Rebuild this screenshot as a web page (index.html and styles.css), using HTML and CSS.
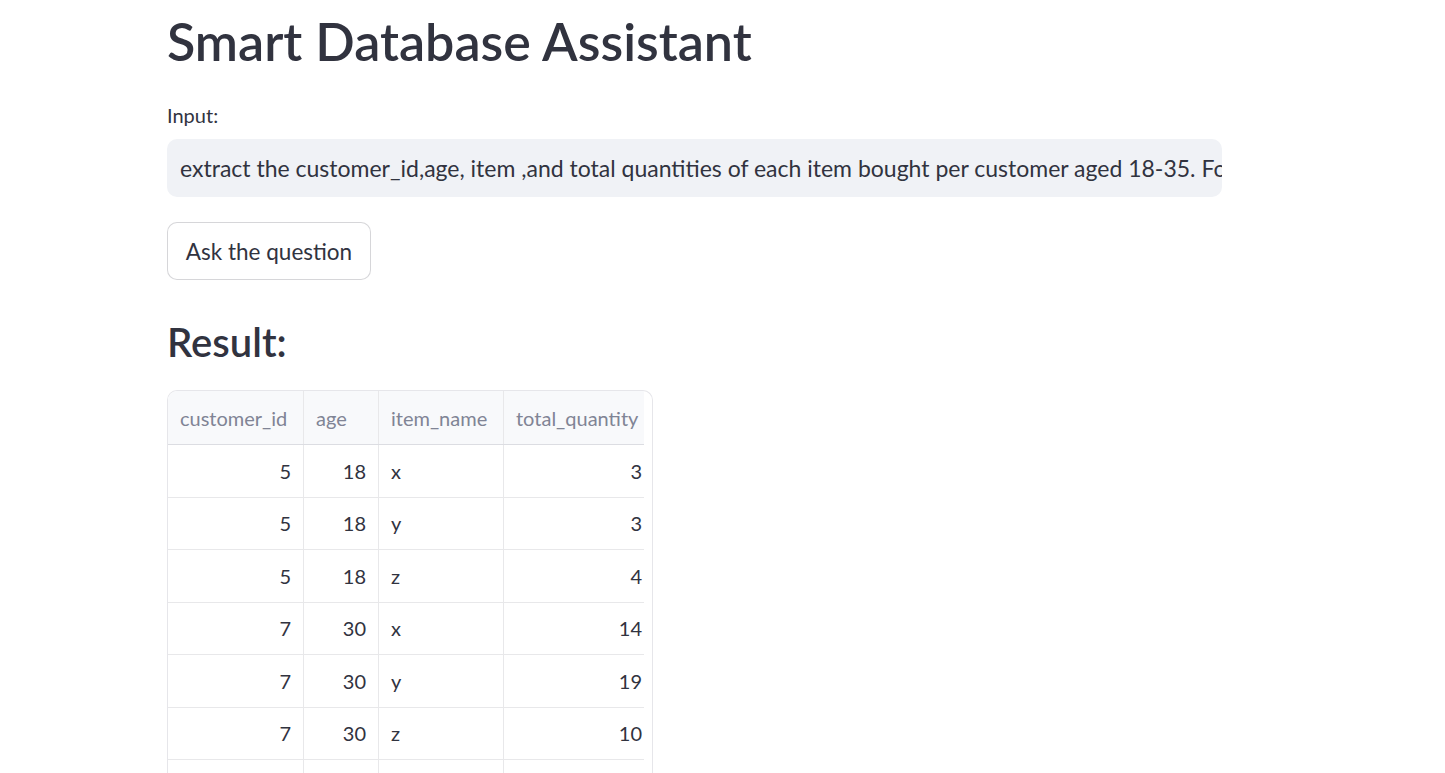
FILE: index.html
```html
<!DOCTYPE html>
<html>
<head>
<meta charset="utf-8">
<link rel="stylesheet" href="styles.css">
</head>
<body>
<main class="main">
  <h1 class="title">Smart Database Assistant</h1>
  <div class="field">
    <label class="label">Input:</label>
    <div class="input">extract the customer_id,age, item ,and total quantities of each item bought per customer aged 18-35. For each customer show the totals</div>
  </div>
  <div class="btn-row"><button class="btn">Ask the question</button></div>
  <h2 class="subtitle">Result:</h2>
  <div class="grid-wrap">
    <div class="grid">
      <div class="row head">
        <div class="cell c1">customer_id</div>
        <div class="cell c2">age</div>
        <div class="cell c3">item_name</div>
        <div class="cell c4">total_quantity</div>
      </div>
      <div class="row"><div class="cell c1 num">5</div><div class="cell c2 num">18</div><div class="cell c3">x</div><div class="cell c4 num">3</div></div>
      <div class="row"><div class="cell c1 num">5</div><div class="cell c2 num">18</div><div class="cell c3">y</div><div class="cell c4 num">3</div></div>
      <div class="row"><div class="cell c1 num">5</div><div class="cell c2 num">18</div><div class="cell c3">z</div><div class="cell c4 num">4</div></div>
      <div class="row"><div class="cell c1 num">7</div><div class="cell c2 num">30</div><div class="cell c3">x</div><div class="cell c4 num">14</div></div>
      <div class="row"><div class="cell c1 num">7</div><div class="cell c2 num">30</div><div class="cell c3">y</div><div class="cell c4 num">19</div></div>
      <div class="row"><div class="cell c1 num">7</div><div class="cell c2 num">30</div><div class="cell c3">z</div><div class="cell c4 num">10</div></div>
      <div class="row"><div class="cell c1"></div><div class="cell c2"></div><div class="cell c3"></div><div class="cell c4"></div></div>
    </div>
  </div>
</main>
</body>
</html>
```

FILE: styles.css
```css
html, body {
  margin: 0;
  padding: 0;
  background: #ffffff;
  color: #31333f;
  font-family: "Lato", "Liberation Sans", sans-serif;
  overflow: hidden;
  height: 773px;
}

.main {
  width: 1055px;
  margin-left: 167px;
  display: flex;
  flex-direction: column;
}

.title {
  margin: 0;
  padding-top: 8px;
  font-size: 52px;
  font-weight: 600;
  line-height: 66px;
  letter-spacing: 0;
}

.field {
  margin-top: 27px;
  display: flex;
  flex-direction: column;
}

.label {
  font-size: 20px;
  line-height: 28px;
  height: 28px;
  margin-bottom: 10px;
}

.input {
  height: 58px;
  background: #f0f2f6;
  border-radius: 10px;
  padding: 0 13px;
  font-size: 23px;
  line-height: 58px;
  white-space: nowrap;
  overflow: hidden;
  box-sizing: border-box;
}

.btn-row {
  margin-top: 25px;
}

.btn {
  height: 58px;
  width: 204px;
  border: 1px solid rgba(49, 51, 63, 0.2);
  border-radius: 10px;
  background: #ffffff;
  color: #31333f;
  font-family: inherit;
  font-size: 22.5px;
  padding: 0;
}

.subtitle {
  margin: 0;
  margin-top: 38px;
  font-size: 40px;
  font-weight: 600;
  line-height: 48px;
}

.grid-wrap {
  margin-top: 24px;
  width: 486px;
  height: 400px;
  border: 1px solid #e6e6ea;
  border-bottom: none;
  border-radius: 10px 10px 0 0;
  overflow: hidden;
  box-sizing: border-box;
}

.grid {
  width: 476px;
  display: flex;
  flex-direction: column;
  overflow: hidden;
}

.row {
  display: flex;
  height: 52.5px;
  border-bottom: 1px solid #e8e8ea;
  box-sizing: border-box;
  flex-shrink: 0;
}

.row.head {
  height: 54px;
  background: #f8f9fb;
  border-bottom: 1px solid #dcdde2;
  color: #808495;
}

.cell {
  box-sizing: border-box;
  border-right: 1px solid #e8e8ea;
  padding: 0 12px;
  font-size: 20px;
  display: flex;
  align-items: center;
  white-space: nowrap;
  overflow: hidden;
  flex-shrink: 0;
}

.c1 { width: 136px; }
.c2 { width: 75px; }
.c3 { width: 125px; }
.c4 { width: 150px; border-right: none; }

.num { justify-content: flex-end; padding-right: 12px; }
```
